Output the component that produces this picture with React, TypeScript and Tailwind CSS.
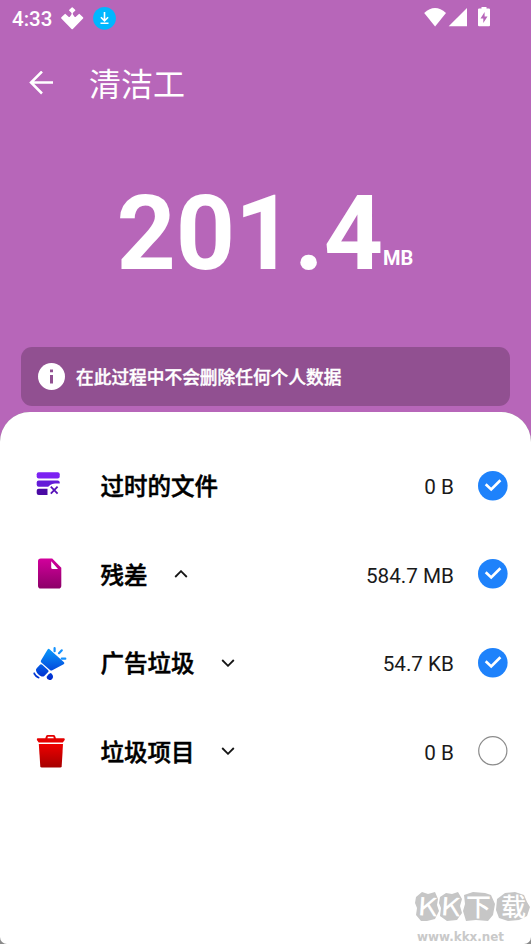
import React from 'react';

type Item = {
  label: string;
  size: string;
  checked: boolean;
  arrow?: 'up' | 'down';
  icon: React.FC;
};

const FilesIcon: React.FC = () => (
  <svg width="36" height="36" viewBox="0 0 36 36" className="block">
    <defs>
      <mask id="filesCut">
        <rect width="36" height="36" fill="#fff" />
        <path d="M15.500 30V20.500Q17 15.800 23 15.500H30V30z" fill="#000" />
      </mask>
    </defs>
    <g mask="url(#filesCut)">
      <rect x="4.7" y="4.2" width="23" height="6.200" rx="2" fill="#7c22f2" />
      <rect x="4.7" y="12.6" width="23" height="6.200" rx="2" fill="#641bd8" />
      <rect x="4.7" y="20.8" width="23" height="6.2" rx="2" fill="#4a0aa4" />
    </g>
    <path d="M18.8 18.6l6.8 7M25.6 18.600l-6.800 7" stroke="#5711b8" strokeWidth="1.800" />
  </svg>
);

const PageIcon: React.FC = () => (
  <svg width="36" height="36" viewBox="0 0 36 36" className="block">
    <defs>
      <linearGradient id="page" x1="0" y1="0" x2="0" y2="1">
        <stop offset="0" stopColor="#d2009c" />
        <stop offset="1" stopColor="#8c0068" />
      </linearGradient>
    </defs>
    <path
      d="M8.8 2.500H20.2L29.3 11.800V29.700a2.8 2.8 0 0 1-2.8 2.8H8.8A2.8 2.8 0 0 1 6 29.700V5.300A2.800 2.800 0 0 1 8.800 2.500zM19.200 5.300V11.500a1.600 1.600 0 0 0 1.600 1.600H26z"
      fill="url(#page)"
      fillRule="evenodd"
    />
  </svg>
);

const MegaphoneIcon: React.FC = () => (
  <svg width="36" height="36" viewBox="0 0 36 36" className="block">
    <defs>
      <linearGradient id="horn" gradientUnits="userSpaceOnUse" x1="0" y1="2" x2="0" y2="36">
        <stop offset="0" stopColor="#0aa0ff" />
        <stop offset="1" stopColor="#0022cc" />
      </linearGradient>
    </defs>
    <g fill="url(#horn)">
      <path d="M15.600 4.500Q16.600 3.200 17.800 4.400L32 17.200Q33 18.400 31.600 19.300L20.300 25.300Q19 25.800 18 24.900L9.300 17.600Q8.400 16.600 9 15.600z" />
      <path d="M8.200 19.600Q9.200 18.800 10.200 19.700L16.200 25.300Q17 26.200 16.200 27L12.300 30.900Q11 32 9.600 31.400Q5.500 30 4.100 26Q3.600 24.500 4.700 23.200z" />
      <path d="M2.500 27.200Q1 27.300 1.400 29Q3.200 32.400 6.400 33.400Q7.700 33.400 7.500 32.200Q4.200 31 2.500 27.200z" />
      <path d="M16.300 29.600L18 28.200Q18.700 27.900 19.500 28.500Q21.200 30 21.100 32Q20.400 35.200 17.400 35.100Q14.800 34.600 14.500 32z" />
    </g>
    <path
      d="M22.600 6.200V3.200M27 8.200l2.800-2.900M29.800 13.700h3.500"
      stroke="#1592ff"
      strokeWidth="2.200"
      strokeLinecap="round"
    />
  </svg>
);

const TrashIcon: React.FC = () => (
  <svg width="36" height="36" viewBox="0 0 36 36" className="block">
    <defs>
      <linearGradient id="trash" x1="0" y1="0" x2="0" y2="1">
        <stop offset="0" stopColor="#e00" />
        <stop offset="1" stopColor="#a50000" />
      </linearGradient>
    </defs>
    <path d="M6.800 11H31L29.700 33.200Q29.600 34.600 28.200 34.600H9.800Q8.400 34.600 8.300 33.200z" fill="url(#trash)" />
    <path
      d="M5.600 5.300H13.300L14 3.300Q14.400 2 15.800 2H21.400Q22.800 2 23.200 3.300L23.900 5.300H31.900Q33.200 5.500 32.700 6.900L30.800 9.500H6.700L4.900 6.900Q4.600 5.500 5.600 5.300zM15.400 5.300H21.800L21.300 3.800H15.900z"
      fill="#e40000"
      fillRule="evenodd"
    />
  </svg>
);

const items: Item[] = [
  { label: '过时的文件', size: '0 B', checked: true, icon: FilesIcon },
  { label: '残差', size: '584.7 MB', checked: true, arrow: 'up', icon: PageIcon },
  { label: '广告垃圾', size: '54.7 KB', checked: true, arrow: 'down', icon: MegaphoneIcon },
  { label: '垃圾项目', size: '0 B', checked: false, arrow: 'down', icon: TrashIcon },
];

const StatusBar: React.FC = () => (
  <div className="flex h-9 items-center pl-3">
    <span className="pt-px text-[20.5px] font-medium leading-9">4:33</span>
    <svg width="24" height="24" viewBox="0 0 24 24" className="ml-2" fill="#fff">
      <path d="M12.200 2L14.600 4.200L12.200 6.400L9.800 4.200z" stroke="#fff" strokeWidth="1.500" strokeLinejoin="round" />
      <path d="M2 11.800L5.200 8.800L8.500 11.800H10.200L12.200 9L14.200 11.800H15.900L19.200 8.800L22.400 11.800L12.200 22.300z" stroke="#fff" strokeWidth="1.800" strokeLinejoin="round" />
      <path d="M12.200 6V12" stroke="#fff" strokeWidth="1.200" />
    </svg>
    <svg width="24" height="24" viewBox="0 0 24 24" className="ml-2">
      <circle cx="12.500" cy="12.300" r="11.400" fill="#00b7ff" />
      <path d="M12.500 6V14.500M8.900 11.300L12.500 14.900L16.100 11.300M8.500 17.200H16.500" stroke="#fff" strokeWidth="1.600" fill="none" />
    </svg>
    <svg width="70" height="24" viewBox="0 0 70 24" className="ml-auto mr-[37px]" fill="#fff">
      <path d="M.2 7Q11 -2.800 22 7L11.100 20.500z" />
      <path d="M43 2V20.300H24.700z" />
      <path d="M57.500 1H62.500V2.500H64.900Q66 2.500 66 3.600V19.200Q66 20.300 64.900 20.300H55.100Q54 20.300 54 19.200V3.600Q54 2.500 55.100 2.500H57.500z" />
      <path d="M60.600 6L56.500 12.400H59.300V17L63.500 10.600H60.600z" fill="#b766b9" />
    </svg>
  </div>
);

const CheckMark: React.FC<{ checked: boolean }> = ({ checked }) => (
  <svg width="30" height="30" viewBox="0 0 30 30" className="ml-[23.500px] block">
    {checked ? (
      <>
        <circle cx="14.800" cy="14.800" r="14.800" fill="#1e82fb" />
        <path d="M7.700 13.300L13.200 18.400L22.400 9.200" stroke="#fff" strokeWidth="2.700" fill="none" />
      </>
    ) : (
      <circle cx="14.800" cy="14.800" r="14.100" fill="#fff" stroke="#8c8c8c" strokeWidth="1.200" />
    )}
  </svg>
);

const Row: React.FC<{ item: Item }> = ({ item }) => (
  <div className="flex h-[88.400px] items-center pl-8 pr-[23.500px]">
    <item.icon />
    <span className="ml-[32.500px] pt-[3px] text-[23.500px] font-medium leading-8 text-black [-webkit-text-stroke:0.500px_black]">
      {item.label}
    </span>
    {item.arrow && (
      <svg width="14" height="8" viewBox="0 0 14 8" className="ml-[26px] block">
        <path
          d={item.arrow === 'up' ? 'M1.200 7L7 1.200L12.800 7' : 'M1.200 1L7 6.800L12.800 1'}
          stroke="#151515"
          strokeWidth="1.800"
          fill="none"
        />
      </svg>
    )}
    <span className="ml-auto pt-[3px] text-[20.700px] leading-6 text-[#1a1a1a]">{item.size}</span>
    <CheckMark checked={item.checked} />
  </div>
);

const Watermark: React.FC = () => (
  <div className="absolute bottom-0 right-0 h-[66px] w-[118px]">
    <svg width="118" height="66" viewBox="0 -12 118 66" className="block">
      <g fill="#c6c6c6">
        <path d="M3 7L9 2L15 4L22 2L25 9L24 15L26 21L22 29L14 31L8 31L3 25L4 18L2 13z" />
        <path d="M27 7L33 3L39 4L45 2L49 9L47 16L49 23L44 30L34 31L27 26L28 18L26 13z" />
        <path d="M51 5L60 2L72 3L78 5L82 14L80 25L75 31L63 30L53 31L50 21L52 14z" />
        <path d="M84 9L92 3L102 2L111 5L114 12L117 17L114 26L106 30L95 31L86 28L83 20z" />
      </g>
      <g fill="#fff" fontFamily="'Noto Sans CJK SC', sans-serif">
        <text transform="translate(4 25) rotate(4)" fontSize="25" textLength="20" lengthAdjust="spacingAndGlyphs">K</text>
        <text transform="translate(27 25) rotate(4)" fontSize="25" textLength="20" lengthAdjust="spacingAndGlyphs">K</text>
        <text x="53" y="26" fontSize="25" fontWeight="500">下</text>
        <text x="88" y="26" fontSize="25" fontWeight="500">载</text>
      </g>
      <text x="4" y="51" fill="#c9c9c9" fontFamily="'DejaVu Sans', sans-serif" fontWeight="700" fontSize="11.500" textLength="87" lengthAdjust="spacingAndGlyphs">
        www.kkx.net
      </text>
    </svg>
  </div>
);

export default function App() {
  return (
    <div className="relative flex h-[944px] w-[531px] flex-col overflow-hidden bg-[#b766b9] font-[Roboto,'Noto_Sans_CJK_SC',sans-serif] text-white">
      <StatusBar />

      {/* Toolbar */}
      <div className="flex h-[94px] items-center pl-[29px]">
        <svg width="25" height="24" viewBox="0 0 25 24" fill="none" stroke="#fff" strokeWidth="2.500">
          <path d="M24 11.500H2.500M13 .5L2 11.500L13 22.500" />
        </svg>
        <h1 className="ml-[35px] pt-1 text-[32px] font-normal leading-10">清洁工</h1>
      </div>

      {/* Total size */}
      <div className="flex h-[217px] items-start pl-[116.500px] pt-[43px]">
        <span className="text-[103.500px] font-bold leading-[122px] tracking-[-0.200px]">201.4</span>
        <span className="pt-[73px] text-[20px] font-bold leading-6">MB</span>
      </div>

      <div className="mx-[21px] flex h-[59px] items-center rounded-[11px] bg-[#915091] pl-[17px]">
        <svg width="27" height="27" viewBox="0 0 27 27">
          <circle cx="13.500" cy="13.500" r="13.500" fill="#fff" />
          <path d="M12 6.500h3v2.800h-3zM12 12h3v8.500h-3z" fill="#915091" />
        </svg>
        <span className="ml-[11px] pt-[3px] text-[17.700px] font-medium leading-6 [-webkit-text-stroke:0.400px_white]">
          在此过程中不会删除任何个人数据
        </span>
      </div>

      <div className="mt-1.5 flex-1 bg-[#b766b9]">
        <div className="h-full rounded-t-[30px] bg-[#8a8a8a]">
          <div className="h-full rounded-t-[30px] rounded-b-[7px] bg-white pt-[29.800px]">
            {items.map((item) => (
              <Row key={item.label} item={item} />
            ))}
          </div>
        </div>
      </div>

      <Watermark />
    </div>
  );
}
